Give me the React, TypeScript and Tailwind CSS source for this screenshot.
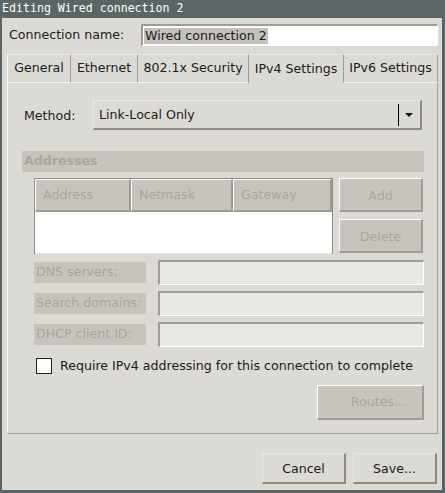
const raised =
  "border-t border-l border-t-white border-l-white border-b-2 border-r-2 border-b-[#a09c94] border-r-[#a09c94]";
const sunken =
  "border-t-2 border-l-2 border-t-[#a09c94] border-l-[#a09c94] border-b border-r border-b-white border-r-white";
const focusable =
  "border-t border-l border-t-[#f4f3f0] border-l-[#f4f3f0] [border-top-style:dotted] [border-left-style:dotted] border-b-2 border-r-2 border-b-[#8f8b84] border-r-[#8f8b84]";

const tabs = [
  { label: "General", w: "w-[63px]" },
  { label: "Ethernet", w: "w-[67px]" },
  { label: "802.1x Security", w: "w-[111px]" },
  { label: "IPv4 Settings", w: "w-[95px]", active: true },
  { label: "IPv6 Settings", w: "w-[95px]" },
];

const fields = ["DNS servers:", "Search domains:", "DHCP client ID:"];

export default function App() {
  return (
    <div
      className="w-[445px] h-[493px] bg-[#5b6566] flex flex-col pl-[2px] pr-[3px] pb-[3px] text-[12.6px] text-[#1a1a1a]"
      style={{ fontFamily: '"DejaVu Sans", sans-serif' }}
    >
      {/* title bar */}
      <div className="h-[18px] flex items-center text-white text-[11.6px] leading-none font-['DejaVu_Sans_Mono',monospace]">
        Editing Wired connection 2
      </div>

      <div className="flex-1 bg-[#dcdad5] flex flex-col">
        {/* connection name */}
        <div className="flex items-center mt-[6px] h-[22px]">
          <span className="ml-[7px] w-[132px]">Connection name:</span>
          <div className={`w-[297px] h-[22px] bg-white flex items-center pl-[1px] ${sunken}`}>
            <span className="bg-[#c4c1ba] px-[1px] leading-[16px]">Wired connection 2</span>
          </div>
        </div>

        {/* tabs */}
        <div className="flex mt-[8px] ml-[5px] h-[29px]">
          {tabs.map((t, i) => (
            <div
              key={t.label}
              className={`${t.w} flex items-center justify-center border-t border-t-[#f4f3f0] [border-top-style:dotted] ${
                i > 0 ? "border-l border-l-[#a09c94]" : "border-l border-l-[#f4f3f0]"
              } ${i === tabs.length - 1 ? "border-r border-r-[#a09c94]" : ""} ${
                t.active ? "" : "border-b border-b-[#f4f3f0]"
              }`}
            >
              {t.label}
            </div>
          ))}
        </div>

        {/* panel */}
        <div className="ml-[5px] w-[431px] h-[351px] border-l border-l-[#f4f3f0] border-b border-b-[#a09c94] border-r border-r-[#a09c94] flex flex-col">
          {/* method */}
          <div className="flex items-center mt-[17px] h-[30px]">
            <span className="ml-[16px] w-[69px] pt-[2px]">Method:</span>
            <div className={`w-[329px] h-[30px] flex items-center ${focusable}`}>
              <span className="flex-1 pl-[5px] pt-[2px]">Link-Local Only</span>
              <div className="w-px h-[22px] bg-black" />
              <svg width="20" height="10" viewBox="0 0 20 10" className="mr-[1px]">
                <path d="M6 3 L14 3 L10 7 Z" fill="#111" />
              </svg>
            </div>
          </div>

          {/* addresses header */}
          <div className="mt-[21px] ml-[14px] w-[402px] h-[21px] bg-[#c8c4bd] flex items-center pl-[2px] font-bold text-[#aaa69f]">
            Addresses
          </div>

          <div className="flex mt-[6px] ml-[26px]">
            <div className="w-[299px] h-[76px] bg-white border-t border-l border-r border-[#8f8b84] flex flex-col">
              <div className="flex h-[33px] bg-[#c8c4bd] text-[#a9a59e]">
                {[
                  ["Address", "w-[96px]"],
                  ["Netmask", "w-[102px]"],
                  ["Gateway", "w-[99px]"],
                ].map(([l, w]) => (
                  <div key={l} className={`${w} flex items-center pl-[7px] pt-[1px] ${raised}`}>
                    {l}
                  </div>
                ))}
              </div>
              <div className="flex-1" />
              <div className="h-px border-b border-dotted border-b-[#cfccc6]" />
            </div>
            <div className="ml-[6px] flex flex-col gap-[7px]">
              <div className={`w-[84px] h-[34px] pt-[4px] bg-[#c8c4bd] text-[#a9a59e] flex items-center justify-center ${raised}`}>
                Add
              </div>
              <div className={`w-[84px] h-[34px] pt-[4px] bg-[#c8c4bd] text-[#a9a59e] flex items-center justify-center ${raised}`}>
                Delete
              </div>
            </div>
          </div>

          {/* dns fields */}
          <div className="flex flex-col gap-[6px] mt-[6px] ml-[26px]">
            {fields.map((f) => (
              <div key={f} className="flex items-center h-[25px]">
                <div className="w-[112px] h-[21px] bg-[#c8c4bd] text-[#a9a59e] flex items-center pl-[2px]">
                  {f}
                </div>
                <div className={`ml-[12px] w-[266px] h-[25px] bg-[#e8e8e6] ${sunken}`} />
              </div>
            ))}
          </div>

          {/* checkbox */}
          <div className="flex items-center mt-[11px] ml-[28px] h-[16px]">
            <div className="w-[16px] h-[16px] bg-white border border-[#222]" />
            <span className="ml-[8px]">Require IPv4 addressing for this connection to complete</span>
          </div>

          {/* routes */}
          <div className="flex justify-end mt-[11px] mr-[13px]">
            <div className={`w-[107px] h-[35px] bg-[#c8c4bd] text-[#a9a59e] flex items-center justify-end pr-[16px] ${raised}`}>
              Routes...
            </div>
          </div>
        </div>

        {/* dialog buttons */}
        <div className="flex justify-end gap-[7px] mt-[19px] mr-[5px]">
          {["Cancel", "Save..."].map((b) => (
            <div key={b} className={`w-[84px] h-[31px] pt-[3px] flex items-center justify-center ${focusable}`}>
              {b}
            </div>
          ))}
        </div>
      </div>
    </div>
  );
}
